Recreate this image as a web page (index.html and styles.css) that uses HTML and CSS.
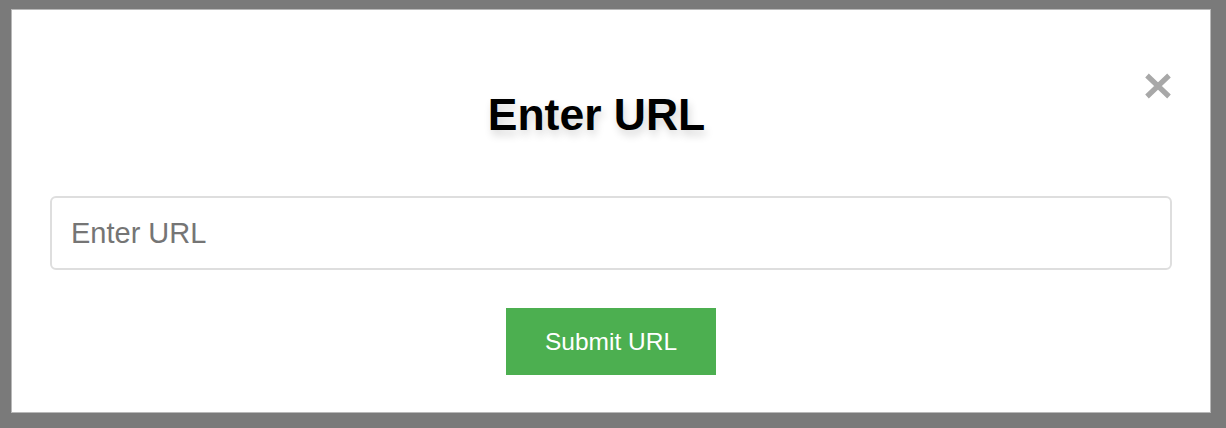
FILE: index.html
```html
<!DOCTYPE html>
<html lang="en">
<head>
<meta charset="utf-8">
<title>Enter URL</title>
<link rel="stylesheet" href="styles.css">
</head>
<body>
<div class="modal">
  <div class="modal-header">
    <h2 class="modal-title">Enter URL</h2>
    <button class="close-btn" type="button" aria-label="Close">
      <svg width="28" height="26" viewBox="0 0 28 26"><path d="M3 2.5 L25 23.5 M25 2.5 L3 23.5" stroke="#a8a8a8" stroke-width="5.2" fill="none"/></svg>
    </button>
  </div>
  <input class="url-input" type="text" placeholder="Enter URL">
  <div class="actions">
    <button class="submit-btn" type="button">Submit URL</button>
  </div>
</div>
</body>
</html>
```
FILE: styles.css
```css
* { box-sizing: border-box; }
html, body { margin: 0; }
body {
  width: 1226px;
  height: 428px;
  background: #7a7a7a;
  padding: 10px 16px 16px 12px;
  font-family: "Liberation Sans", Arial, sans-serif;
}
.modal {
  height: 402px;
  background: #fff;
  padding: 38px;
  box-shadow: 0 0 0 1px #b8b8b8;
}
.modal-header {
  display: flex;
  align-items: flex-start;
  margin-top: 25px;
}
.modal-title {
  flex: 1;
  margin: 17px 0 0;
  font-size: 44.5px;
  line-height: 50px;
  font-weight: 700;
  color: #000;
  text-align: center;
  text-shadow: 2px 5px 8px rgba(0, 0, 0, 0.16);
}
.close-btn {
  width: 29px;
  height: 26px;
  padding: 0;
  border: 0;
  background: none;
  display: flex;
  justify-content: flex-end;
}
.close-btn svg { display: block; }
.url-input {
  display: block;
  width: 100%;
  height: 74px;
  margin-top: 56px;
  border: 2px solid #dedede;
  border-radius: 6px;
  padding: 0 19px;
  font-family: "Liberation Sans", Arial, sans-serif;
  font-size: 29px;
  color: #333;
  outline: none;
}
.url-input::placeholder { color: #757575; }
.actions {
  display: flex;
  justify-content: center;
  margin-top: 38px;
}
.submit-btn {
  width: 210px;
  height: 67px;
  border: 0;
  background: #4caf50;
  color: #fff;
  font-family: "Liberation Sans", Arial, sans-serif;
  font-size: 24.5px;
  padding: 0;
}
```
